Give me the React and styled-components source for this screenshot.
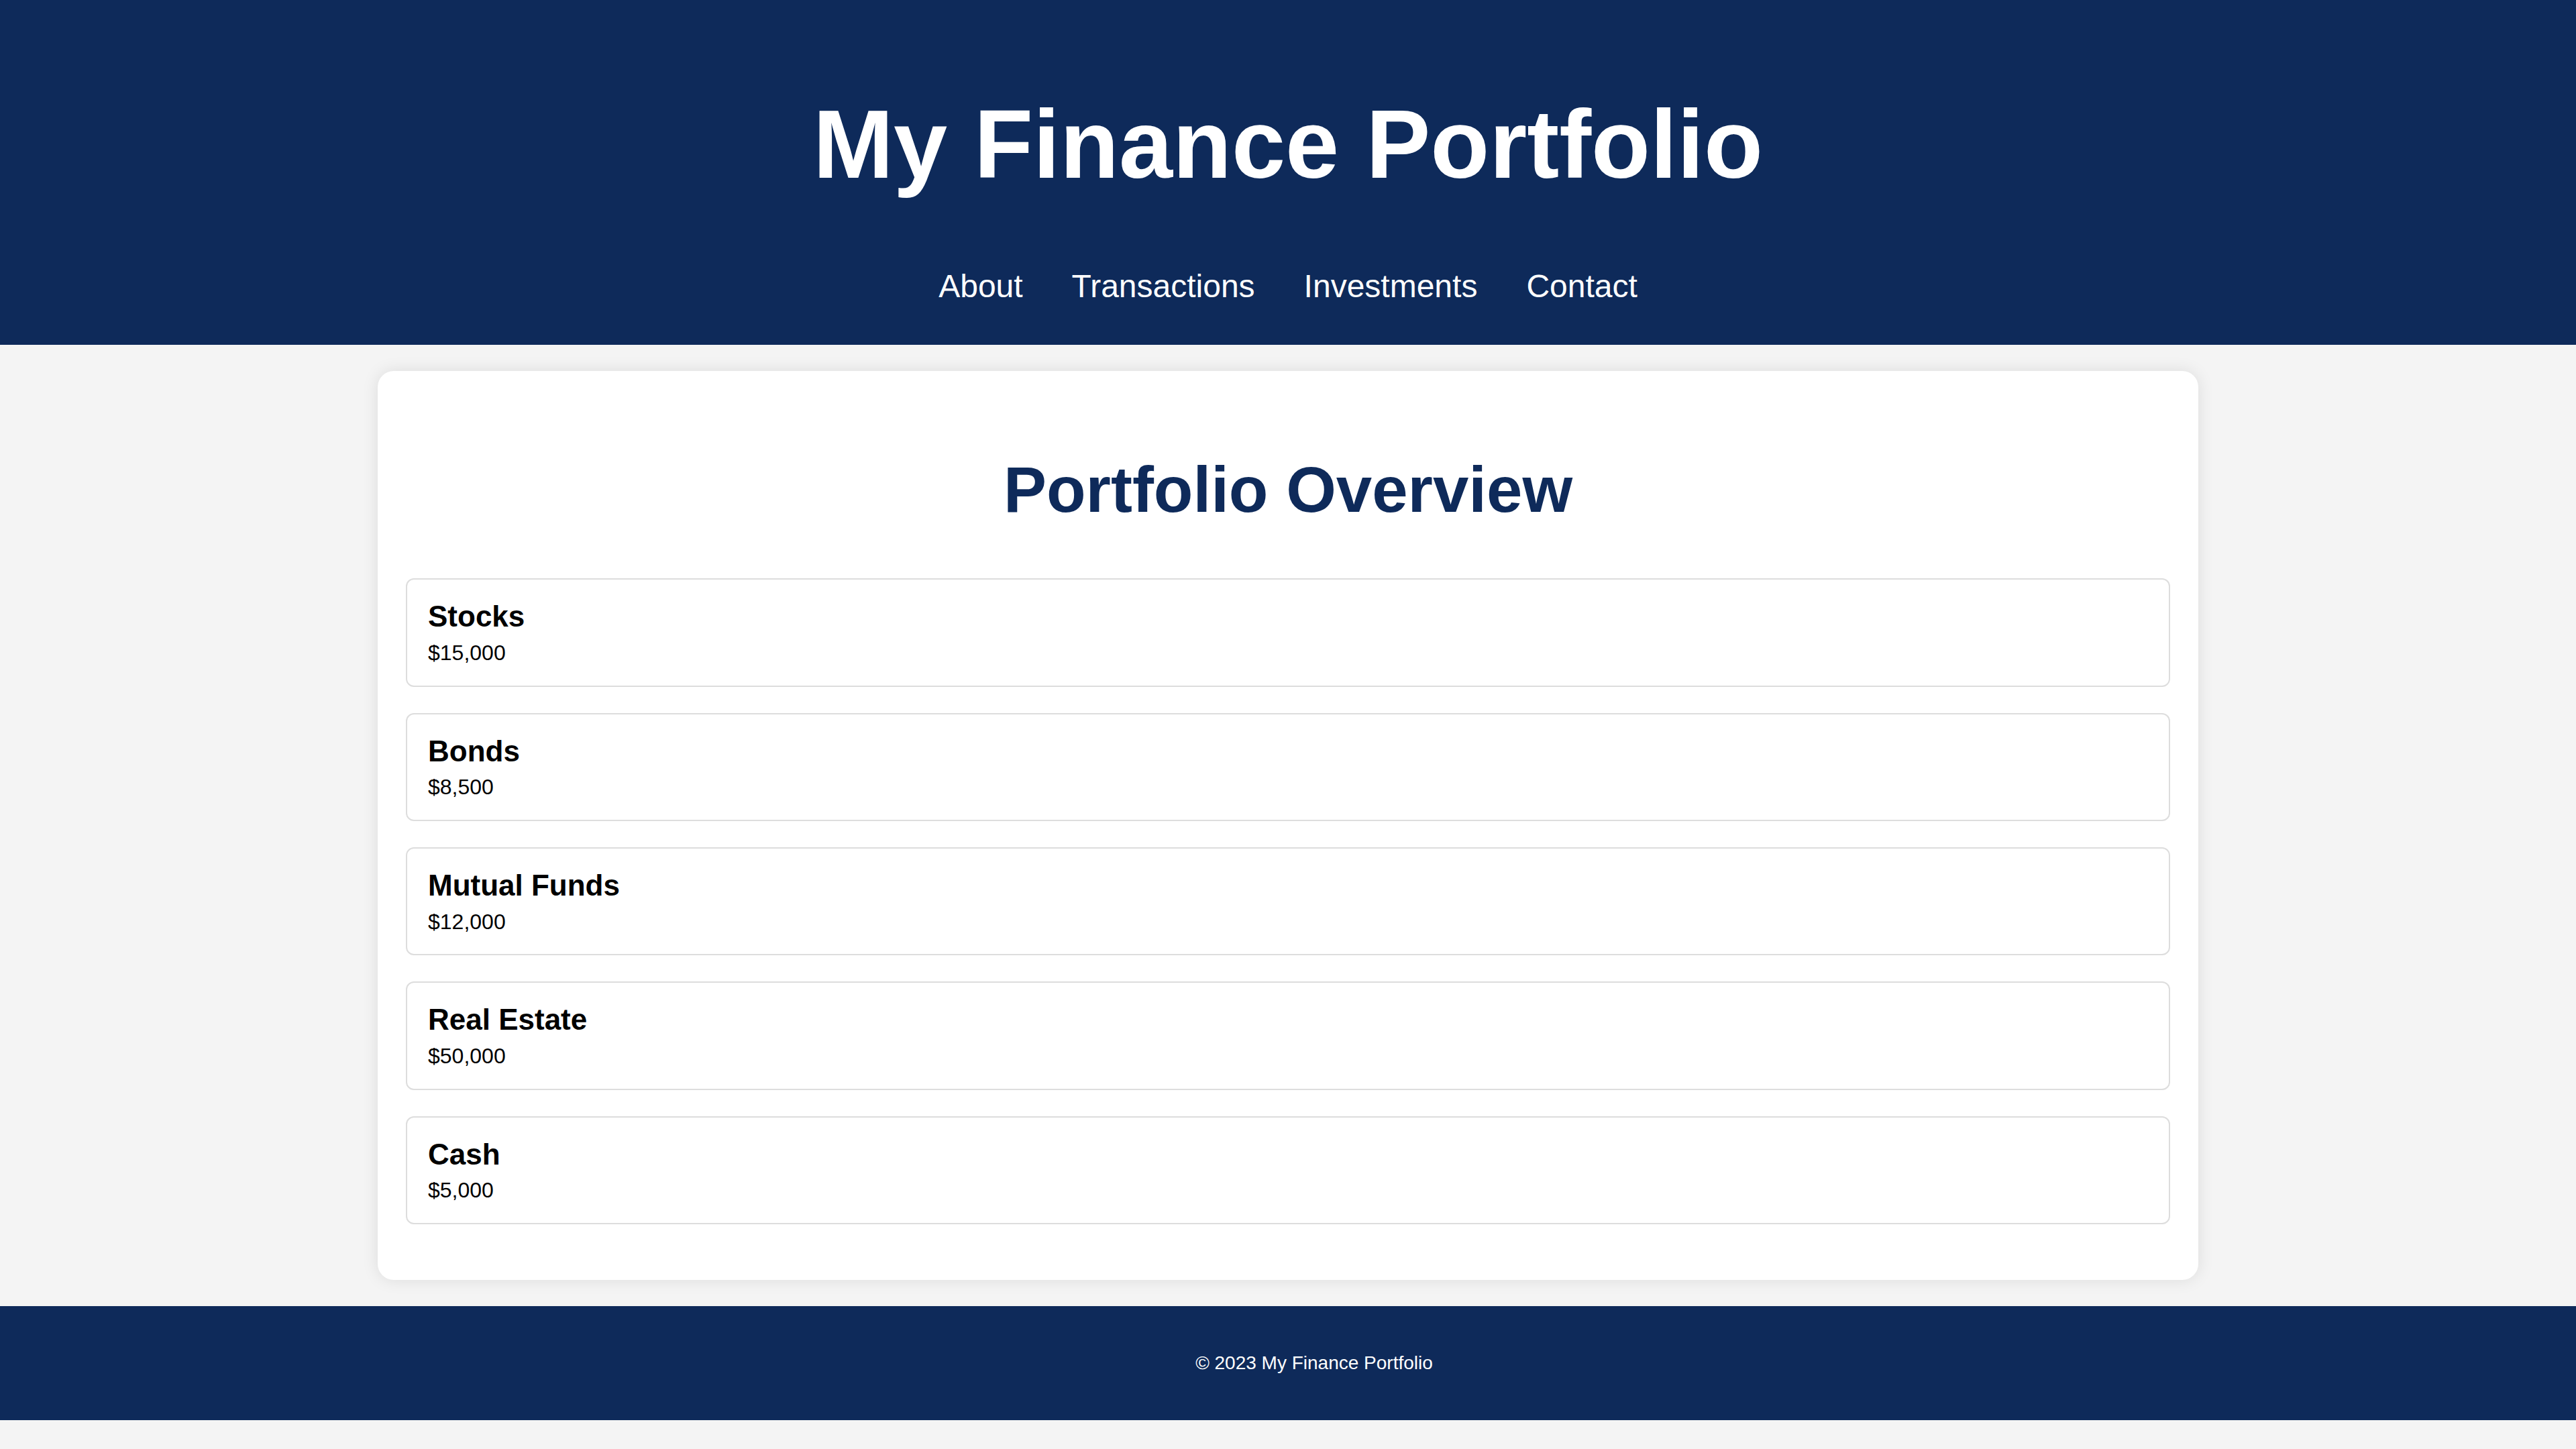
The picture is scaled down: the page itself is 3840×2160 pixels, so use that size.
import React from 'react';
import styled, { createGlobalStyle } from 'styled-components';

const GlobalStyle = createGlobalStyle`
  html, body {
    margin: 0;
    padding: 0;
    background: #f4f4f4;
    font-family: "Liberation Sans", Arial, Helvetica, sans-serif;
    color: #000;
  }
`;

const navy = '#0e2a5a';

const Header = styled.header`
  background: ${navy};
  color: #ffffff;
  text-align: center;
  padding: 37px 0 60px;
`;

const SiteTitle = styled.h1`
  font-size: 144px;
  font-weight: 700;
  margin: 96px 0 100px;
  line-height: 1.15;
`;

const Nav = styled.nav`
  display: flex;
  justify-content: center;
`;

const NavLink = styled.a`
  color: #ffffff;
  text-decoration: none;
  font-size: 48px;
  line-height: 1.15;
  margin: 0 36.5px;
`;

const Main = styled.main`
  width: 2714px;
  box-sizing: border-box;
  margin: 39px auto;
  background: #ffffff;
  border-radius: 24px;
  padding: 1px 42px 44px;
  box-shadow: 0 0 25px rgba(0, 0, 0, 0.1);
`;

const SectionTitle = styled.h2`
  color: ${navy};
  text-align: center;
  font-size: 96px;
  font-weight: 700;
  line-height: 1.15;
  margin: 121px 0 77px;
`;

const Item = styled.div`
  border: 2px solid #dddddd;
  border-radius: 12px;
  padding: 30px 31px;
  margin-bottom: 39px;
`;

const ItemName = styled.h3`
  font-size: 44px;
  font-weight: 700;
  line-height: 1.15;
  margin: 0 0 10px;
`;

const ItemValue = styled.p`
  font-size: 32px;
  line-height: 1.15;
  margin: 0;
`;

const Footer = styled.footer`
  background: ${navy};
  color: #ffffff;
  text-align: center;
  padding: 41px 0 41px 78px;
`;

const FooterText = styled.p`
  font-size: 28px;
  line-height: 1.15;
  margin: 28px 0;
`;

const holdings = [
  { name: 'Stocks', value: '$15,000' },
  { name: 'Bonds', value: '$8,500' },
  { name: 'Mutual Funds', value: '$12,000' },
  { name: 'Real Estate', value: '$50,000' },
  { name: 'Cash', value: '$5,000' },
];

const App = () => {
  return (
    <>
      <GlobalStyle />
      <Header>
        <SiteTitle>My Finance Portfolio</SiteTitle>
        <Nav>
          <NavLink href="#about">About</NavLink>
          <NavLink href="#transactions">Transactions</NavLink>
          <NavLink href="#investments">Investments</NavLink>
          <NavLink href="#contact">Contact</NavLink>
        </Nav>
      </Header>
      <Main>
        <SectionTitle>Portfolio Overview</SectionTitle>
        {holdings.map((h) => (
          <Item key={h.name}>
            <ItemName>{h.name}</ItemName>
            <ItemValue>{h.value}</ItemValue>
          </Item>
        ))}
      </Main>
      <Footer>
        <FooterText>© 2023 My Finance Portfolio</FooterText>
      </Footer>
    </>
  );
};

export default App;
